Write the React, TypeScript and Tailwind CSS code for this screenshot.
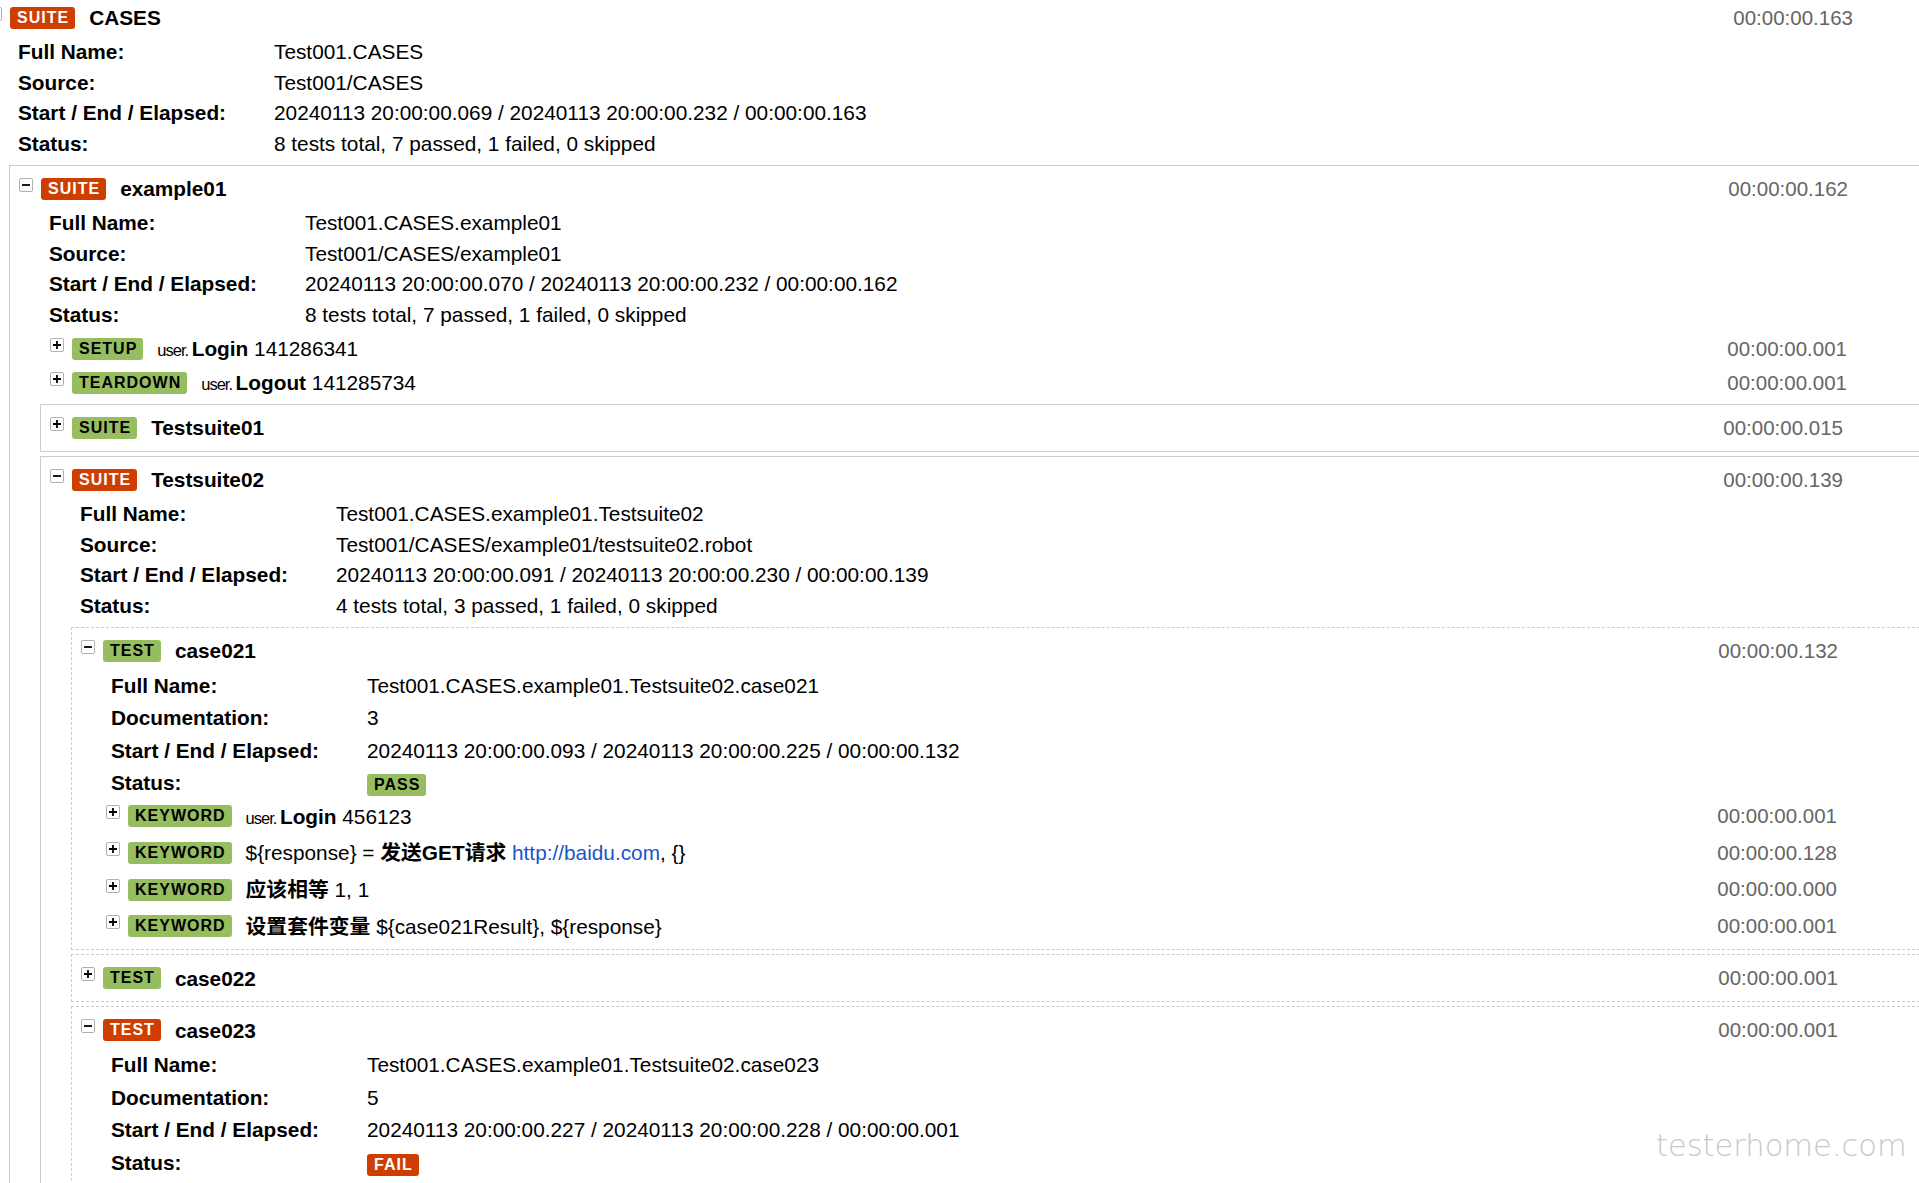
import React from 'react';

type Status = 'pass' | 'fail';

const Label = ({ status, children }: { status: Status; children: React.ReactNode }) => (
  <span
    className={`inline-flex h-[22px] items-center rounded-[3px] pl-[7px] pr-[6px] text-[16px] font-bold leading-none tracking-[1px] ${
      status === 'fail' ? 'bg-[#ce3e01] text-white' : 'bg-[#97bd61] text-black'
    }`}
  >
    {children}
  </span>
);

const Toggle = ({ open }: { open: boolean }) => (
  <span className="mb-[8px] flex h-[14px] w-[14px] shrink-0 items-center justify-center rounded-[2px] border border-[#b0b0b0] bg-white">
    <svg width="8" height="8" viewBox="0 0 8 8">
      <path d={open ? 'M0 4h8' : 'M0 4h8M4 0v8'} stroke="#000" strokeWidth="1.8" />
    </svg>
  </span>
);

interface HeaderProps {
  open: boolean;
  status: Status;
  type: string;
  time: string;
  kw?: boolean;
  children: React.ReactNode;
}

const Header = ({ open, status, type, time, kw, children }: HeaderProps) => (
  <div className={`flex h-[34px] items-center whitespace-nowrap ${kw ? 'pl-[10px] pr-[87px]' : 'pl-[9px] pr-[86px]'}`}>
    <Toggle open={open} />
    <span className="ml-[8px] flex">
      <Label status={status}>{type}</Label>
    </span>
    <span className="ml-[14px]">{children}</span>
    <span className="ml-auto text-[20.5px] text-[#666]">{time}</span>
  </div>
);

const Meta = ({ rows, test }: { rows: [string, React.ReactNode][]; test?: boolean }) => (
  <div className={`pl-[39px] ${test ? 'pt-[1px]' : 'pt-[1px] pb-[3px]'}`}>
    {rows.map(([k, v]) => (
      <div key={k} className={`grid grid-cols-[256px_1fr] items-center whitespace-nowrap ${test ? 'h-[32.6px]' : 'h-[30.5px]'}`}>
        <span className="font-bold">{k}</span>
        <span>{v}</span>
      </div>
    ))}
  </div>
);

const Box = ({ dashed, children }: { dashed?: boolean; children: React.ReactNode }) => (
  <div className={`mt-[4px] mr-[4px] border border-[#ccc] pt-[6px] pb-[6px] ${dashed ? 'border-dashed' : ''}`}>{children}</div>
);

const Parent = ({ name }: { name: string }) => (
  <span className="text-[16.5px] tracking-[-1px]">{name}. </span>
);

const Keyword = ({ type, time, children }: { type: string; time: string; children: React.ReactNode }) => (
  <Header kw open={false} status="pass" type={type} time={time}>
    {children}
  </Header>
);

const App = () => {
  return (
    <div className="relative h-screen w-full overflow-hidden bg-white text-[20.8px] text-black [font-family:'Liberation_Sans',Arial,'Noto_Sans_CJK_SC',sans-serif]">
      <div className="-mt-[10px] -ml-[22px] w-[1966px]">
        <Box>
          <Header open status="fail" type="SUITE" time="00:00:00.163">
            <b>CASES</b>
          </Header>
          <Meta
            rows={[
              ['Full Name:', 'Test001.CASES'],
              ['Source:', 'Test001/CASES'],
              ['Start / End / Elapsed:', '20240113 20:00:00.069 / 20240113 20:00:00.232 / 00:00:00.163'],
              ['Status:', '8 tests total, 7 passed, 1 failed, 0 skipped'],
            ]}
          />
          <div className="ml-[30px]">
            <Box>
              <Header open status="fail" type="SUITE" time="00:00:00.162">
                <b>example01</b>
              </Header>
              <Meta
                rows={[
                  ['Full Name:', 'Test001.CASES.example01'],
                  ['Source:', 'Test001/CASES/example01'],
                  ['Start / End / Elapsed:', '20240113 20:00:00.070 / 20240113 20:00:00.232 / 00:00:00.162'],
                  ['Status:', '8 tests total, 7 passed, 1 failed, 0 skipped'],
                ]}
              />
              <div className="ml-[30px]">
                <Keyword type="SETUP" time="00:00:00.001">
                  <Parent name="user" />
                  <b>Login</b> 141286341
                </Keyword>
                <Keyword type="TEARDOWN" time="00:00:00.001">
                  <Parent name="user" />
                  <b>Logout</b> 141285734
                </Keyword>
                <Box>
                  <Header open={false} status="pass" type="SUITE" time="00:00:00.015">
                    <b>Testsuite01</b>
                  </Header>
                </Box>
                <Box>
                  <Header open status="fail" type="SUITE" time="00:00:00.139">
                    <b>Testsuite02</b>
                  </Header>
                  <Meta
                    rows={[
                      ['Full Name:', 'Test001.CASES.example01.Testsuite02'],
                      ['Source:', 'Test001/CASES/example01/testsuite02.robot'],
                      ['Start / End / Elapsed:', '20240113 20:00:00.091 / 20240113 20:00:00.230 / 00:00:00.139'],
                      ['Status:', '4 tests total, 3 passed, 1 failed, 0 skipped'],
                    ]}
                  />
                  <div className="ml-[30px]">
                    <Box dashed>
                      <Header open status="pass" type="TEST" time="00:00:00.132">
                        <b>case021</b>
                      </Header>
                      <Meta
                        test
                        rows={[
                          ['Full Name:', 'Test001.CASES.example01.Testsuite02.case021'],
                          ['Documentation:', '3'],
                          ['Start / End / Elapsed:', '20240113 20:00:00.093 / 20240113 20:00:00.225 / 00:00:00.132'],
                          ['Status:', <Label status="pass">PASS</Label>],
                        ]}
                      />
                      <div className="ml-[24px] flex flex-col gap-[2.7px]">
                        <Keyword type="KEYWORD" time="00:00:00.001">
                          <Parent name="user" />
                          <b>Login</b> 456123
                        </Keyword>
                        <Keyword type="KEYWORD" time="00:00:00.128">
                          {'${response} = '}
                          <b>发送GET请求</b> <span className="text-[#1a55cc]">http://baidu.com</span>, {'{}'}
                        </Keyword>
                        <Keyword type="KEYWORD" time="00:00:00.000">
                          <b>应该相等</b> 1, 1
                        </Keyword>
                        <Keyword type="KEYWORD" time="00:00:00.001">
                          <b>设置套件变量</b> {'${case021Result}, ${response}'}
                        </Keyword>
                      </div>
                    </Box>
                    <Box dashed>
                      <Header open={false} status="pass" type="TEST" time="00:00:00.001">
                        <b>case022</b>
                      </Header>
                    </Box>
                    <Box dashed>
                      <Header open status="fail" type="TEST" time="00:00:00.001">
                        <b>case023</b>
                      </Header>
                      <Meta
                        test
                        rows={[
                          ['Full Name:', 'Test001.CASES.example01.Testsuite02.case023'],
                          ['Documentation:', '5'],
                          ['Start / End / Elapsed:', '20240113 20:00:00.227 / 20240113 20:00:00.228 / 00:00:00.001'],
                          ['Status:', <Label status="fail">FAIL</Label>],
                        ]}
                      />
                    </Box>
                  </div>
                </Box>
              </div>
            </Box>
          </div>
        </Box>
      </div>
      <span className="pointer-events-none absolute left-[1656px] top-[1131px] text-[30.5px] leading-none font-extralight text-[#c8c8c8] [font-family:'DejaVu_Sans',sans-serif]">
        testerhome.com
      </span>
    </div>
  );
};

export default App;
